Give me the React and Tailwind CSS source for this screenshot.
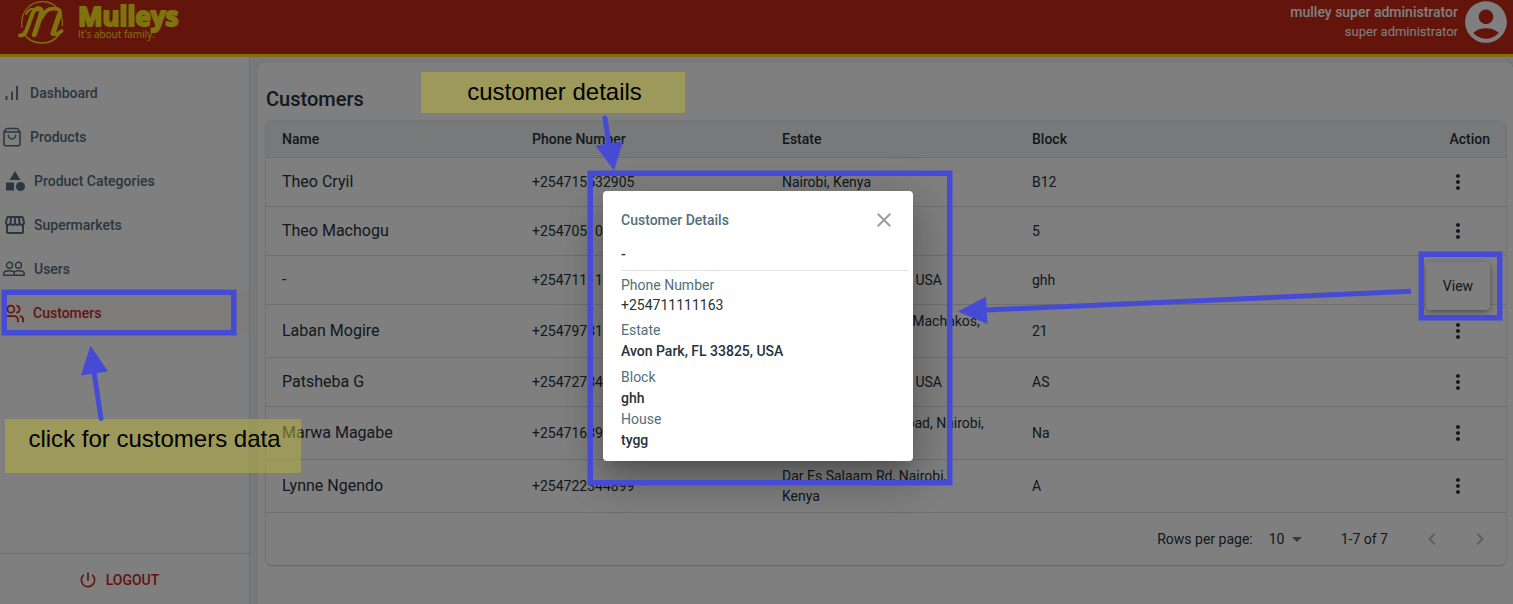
import React from "react";
import {
  MdAccountCircle,
  MdArrowDropDown,
  MdCategory,
  MdChevronLeft,
  MdChevronRight,
  MdClose,
  MdMoreVert,
  MdPowerSettingsNew,
  MdOutlineStorefront,
} from "react-icons/md";
import { FiUsers } from "react-icons/fi";

function BarsIcon() {
  return (
    <svg width="16" height="20" viewBox="0 0 16 20" fill="none" stroke="currentColor" aria-hidden="true">
      <path d="M3.500 13v4M9 8.500v8.500M14 3v14" strokeWidth="1.800" />
    </svg>
  );
}

function BagIcon() {
  return (
    <svg width="18" height="20" viewBox="0 0 18 20" fill="none" stroke="currentColor" strokeWidth="1.500" strokeLinecap="round" strokeLinejoin="round" aria-hidden="true">
      <path d="M3.600 1.500h10.800L17 4.700v12.100a1.900 1.900 0 0 1-1.900 1.900H2.900A1.900 1.900 0 0 1 1 16.800V4.700zM1 5h16M5.300 8.200a3.700 3.700 0 0 0 7.400 0" />
    </svg>
  );
}

function PeopleIcon() {
  return (
    <svg width="22" height="16" viewBox="0 0 22 16" fill="none" stroke="currentColor" strokeWidth="1.400" aria-hidden="true">
      <circle cx="6.500" cy="4.300" r="3" />
      <circle cx="15.500" cy="4.300" r="3" />
      <path d="M.8 14.300v-1.800c0-1.600 2.300-2.700 5.300-2.700s5.300 1.100 5.300 2.700v1.800zM11.400 14.300h9.800v-1.800c0-1.600-2.300-2.700-5.300-2.700-2 0-3.700.5-4.600 1.300" />
    </svg>
  );
}

function LogoMark() {
  return (
    <svg width="50" height="47" viewBox="48 0 150 141" fill="none" stroke="currentColor" strokeLinecap="round" strokeLinejoin="round" aria-hidden="true">
      <path d="M66 82C60 38 88 5 128 5c38 0 62 32 59 72" strokeWidth="3.500" />
      <path d="M70 96c20 42 82 44 108 6" strokeWidth="4.500" />
      <path d="M60 106c12 2 18-8 22-22l15-42c4-12 10-16 20-16" strokeWidth="12" />
      <path d="M79 42c4-11 10-16 22-16" strokeWidth="6" />
      <path d="M103 104l20-60c4-13-1-19-11-18" strokeWidth="15" />
      <path d="M126 52c7-17 18-26 33-26 17-1 24 5 20 18l-17 46c-5 15 4 18 23 3" strokeWidth="11" />
      <path d="M178 44l-19 56" strokeWidth="15" />
    </svg>
  );
}

function LogoText() {
  return (
    <svg width="120" height="48" viewBox="0 0 120 48" fill="currentColor" role="img" aria-label="Mulleys, It's about family." className="font-['Open_Sans',sans-serif]">
      <text x="2" y="26" fontSize="26" fontWeight="700" stroke="currentColor" strokeWidth="2" strokeLinejoin="round">
        Mulleys
      </text>
      <text x="2" y="38" fontSize="10">
        It's about family.
      </text>
    </svg>
  );
}

const navItems = [
  { label: "Dashboard", icon: <BarsIcon />, gap: "gap-[11px]" },
  { label: "Products", icon: <BagIcon />, gap: "gap-[9px]" },
  { label: "Product Categories", icon: <MdCategory size={24} />, gap: "gap-[7px]" },
  { label: "Supermarkets", icon: <MdOutlineStorefront size={24} />, gap: "gap-[7px]" },
  { label: "Users", icon: <PeopleIcon />, gap: "gap-[9px]" },
  { label: "Customers", icon: <FiUsers size={21} />, gap: "gap-[9px]", active: true },
];

const customers = [
  { name: "Theo Cryil", phone: "+254715532905", estate: "Nairobi, Kenya", block: "B12" },
  { name: "Theo Machogu", phone: "+254705101234", estate: "Nairobi, Kenya", block: "5" },
  { name: "-", phone: "+254711111163", estate: "Avon Park, FL 33825, USA", block: "ghh", open: true },
  { name: "Laban Mogire", phone: "+254797311234", estate: "Mombasa Rd, Mlolo, Machakos,\nKenya", block: "21" },
  { name: "Patsheba G", phone: "+254727341234", estate: "Avon Park, FL 33825, USA", block: "AS" },
  { name: "Marwa Magabe", phone: "+254716391234", estate: "Kenyatta Junction Road, Nairobi,\nKenya", block: "Na" },
  { name: "Lynne Ngendo", phone: "+254722344899", estate: "Dar Es Salaam Rd, Nairobi,\nKenya", block: "A" },
];

function Header() {
  return (
    <header className="flex h-[57px] shrink-0 items-start justify-between border-b-[3px] border-[#ffe119] bg-[#c62a17] pl-4 pr-[2px]">
      <div className="flex items-start gap-[10px] text-[#ffe61c]">
        <LogoMark />
        <LogoText />
      </div>
      <div className="flex items-start">
        <div className="pt-[2px] text-right text-white">
          <p className="text-sm font-medium leading-5">mulley super administrator</p>
          <p className="text-[13px] leading-5">super administrator</p>
        </div>
        <button type="button" aria-label="Account" className="-mt-[3px] ml-[3px] text-white">
          <MdAccountCircle size={50} />
        </button>
      </div>
    </header>
  );
}

function Sidebar() {
  return (
    <aside className="flex w-[250px] shrink-0 flex-col justify-between border-r border-[#dcdcdc] bg-white">
      <nav className="pt-[14px]">
        {navItems.map((item) => (
          <a
            key={item.label}
            href="#"
            className={`flex h-11 items-center pl-[3px] text-sm font-medium ${item.gap} ${
              item.active ? "bg-[#fdf9f6] text-[#c62828]" : "text-[#546e7a]"
            }`}
          >
            {item.icon}
            {item.label}
          </a>
        ))}
      </nav>
      <div className="border-t border-[#dcdcdc]">
        <button type="button" className="flex h-[50px] w-full items-center justify-center gap-2 pr-3 pt-[2px] text-sm font-medium text-[#c62828]">
          <MdPowerSettingsNew size={20} />
          LOGOUT
        </button>
      </div>
    </aside>
  );
}

function CustomersTable() {
  return (
    <div className="rounded-md shadow-[0_1px_2px_rgba(0,0,0,0.16),0_0_0_1px_rgba(0,0,0,0.06)]">
      <table className="w-full table-fixed border-collapse text-left text-sm text-[#263238]">
        <colgroup>
          <col className="w-[250px]" />
          <col className="w-[250px]" />
          <col className="w-[250px]" />
          <col />
          <col className="w-24" />
        </colgroup>
        <thead className="bg-[#f0f3f6]">
          <tr className="h-9 border-b border-[#dedede]">
            {["Name", "Phone Number", "Estate", "Block"].map((label) => (
              <th key={label} className="px-4 font-medium">{label}</th>
            ))}
            <th className="px-4 text-right font-medium">Action</th>
          </tr>
        </thead>
        <tbody>
          {customers.map((row) => (
            <tr key={row.phone} className="h-[49px] border-b border-[#dedede]">
              <td className="px-4 text-base">{row.name}</td>
              <td className="px-4">{row.phone}</td>
              <td className="whitespace-pre-line py-[6px] pl-4 leading-5">{row.estate}</td>
              <td className="px-4">{row.block}</td>
              <td className="relative pl-9">
                {row.open ? (
                  <div className="absolute left-4 top-[6px] flex h-12 w-16 items-center justify-center rounded bg-white shadow-[0_2px_6px_rgba(0,0,0,0.4)]">
                    <button type="button">View</button>
                  </div>
                ) : (
                  <button type="button" aria-label="Row actions" className="block">
                    <MdMoreVert size={24} />
                  </button>
                )}
              </td>
            </tr>
          ))}
        </tbody>
      </table>
      <div className="flex h-[52px] items-center justify-end pr-[14px] text-sm text-[#263238]">
        <label htmlFor="rows">Rows per page:</label>
        <div className="relative ml-4 flex items-center">
          <select id="rows" defaultValue="10" className="w-9 appearance-none bg-transparent">
            <option>10</option>
          </select>
          <MdArrowDropDown size={24} className="pointer-events-none absolute -right-1 text-[#757575]" />
        </div>
        <span className="ml-9">1-7 of 7</span>
        <button type="button" aria-label="Previous page" className="ml-8 text-[#bdbdbd]">
          <MdChevronLeft size={24} />
        </button>
        <button type="button" aria-label="Next page" className="ml-6 text-[#bdbdbd]">
          <MdChevronRight size={24} />
        </button>
      </div>
    </div>
  );
}

function Dialog() {
  return (
    <section
      role="dialog"
      aria-label="Customer Details"
      className="absolute left-[603px] top-[191px] z-20 w-[310px] rounded bg-white pb-[11px] pl-[18px] pr-[5px] pt-[17px] text-sm leading-5 text-[#263238] shadow-[0_11px_15px_-7px_rgba(0,0,0,0.2),0_24px_38px_3px_rgba(0,0,0,0.14),0_9px_46px_8px_rgba(0,0,0,0.12)]"
    >
      <div className="flex items-center justify-between pr-3">
        <h2 className="font-medium text-[#546e7a]">Customer Details</h2>
        <button type="button" aria-label="Close" className="text-[#9e9e9e]">
          <MdClose size={24} />
        </button>
      </div>
      <p className="mb-1 border-b border-[#e0e0e0] pb-[6px] pt-3 font-medium">-</p>
      <dl className="flex flex-col">
        <div>
          <dt className="text-[#546e7a]">Phone Number</dt>
          <dd>+254711111163</dd>
        </div>
        <div className="mb-[6px] mt-[5px] flex flex-col gap-px">
          <dt className="text-[#546e7a]">Estate</dt>
          <dd className="font-medium">Avon Park, FL 33825, USA</dd>
        </div>
        <div className="flex flex-col gap-px">
          <dt className="text-[#546e7a]">Block</dt>
          <dd className="font-medium">ghh</dd>
          <dt className="text-[#546e7a]">House</dt>
          <dd className="font-medium">tygg</dd>
        </div>
      </dl>
    </section>
  );
}

function Annotations() {
  const box = "absolute border-[5px] border-[#464bd5] outline outline-1 outline-[#464bd5]/50";
  const note =
    "absolute flex justify-center bg-[#bcb438]/50 pl-[3px] font-['Liberation_Sans',Arial,sans-serif] text-2xl text-black";
  return (
    <div className="pointer-events-none absolute inset-0 z-30">
      <div className={`${box} left-[2px] top-[290px] h-[45px] w-[234px]`} />
      <div className={`${box} left-[588px] top-[171px] h-[314px] w-[364px]`} />
      <div className={`${box} left-[1419px] top-[252px] h-[68px] w-[83px]`} />
      <p className={`${note} left-[421px] top-[72px] h-[41px] w-[264px] pt-1`}>customer details</p>
      <p className={`${note} left-[5px] top-[419px] h-[54px] w-[296px] pt-1`}>click for customers data</p>
      <svg className="absolute left-0 top-0" width="1513" height="604" fill="#464bd5" stroke="#464bd5" strokeWidth="5" aria-hidden="true">
        <path d="M101 418.500L94 372M605 118l4 27" strokeLinecap="round" />
        <path d="M1411 291.300L985 310" />
        <path d="M90.500 345.500l17.500 26-27 4zM614 170.500l-18.500-25 27.500-4zM958 311.500l28-15 1.500 27.500z" stroke="none" />
      </svg>
    </div>
  );
}

export default function App() {
  return (
    <div className="relative flex min-h-screen flex-col overflow-hidden bg-[#eff2f7] font-[Roboto,sans-serif]">
      <Header />
      <div className="flex flex-1">
        <Sidebar />
        <main className="ml-2 mt-[5px] min-w-0 flex-1 rounded-t-md bg-white pl-2 pr-[7px] pt-[22px] shadow-[0_0_1px_rgba(0,0,0,0.3)]">
          <h1 className="mb-[7px] text-xl font-medium leading-[30px] text-[#263238]">Customers</h1>
          <CustomersTable />
        </main>
      </div>
      <div className="absolute inset-0 z-10 bg-black/50" />
      <Dialog />
      <Annotations />
    </div>
  );
}
